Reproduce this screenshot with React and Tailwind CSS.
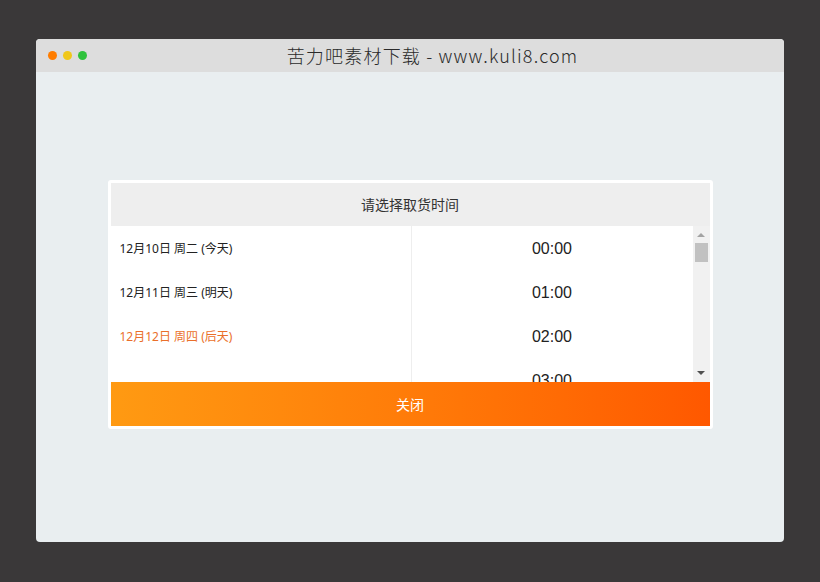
import React from "react";

const days = [
  { label: "12月10日 周二 (今天)", active: false },
  { label: "12月11日 周三 (明天)", active: false },
  { label: "12月12日 周四 (后天)", active: true },
];

const times = ["00:00", "01:00", "02:00", "03:00"];

const App = () => {
  return (
    <div className="w-[820px] h-[582px] bg-[#3a3839] pt-[39px] px-[36px] font-['Noto_Sans','Noto_Sans_CJK_SC',sans-serif]">
      <div className="w-[748px] h-[503px] flex flex-col rounded-[4px] overflow-hidden bg-[#e9eef0]">
        {/* title bar */}
        <div className="h-[33px] bg-[#dddddd] flex items-center relative">
          <div className="flex gap-[6px] pl-[12px]">
            <span className="w-[9px] h-[9px] rounded-full bg-[#ff7d00]" />
            <span className="w-[9px] h-[9px] rounded-full bg-[#f0c71a]" />
            <span className="w-[9px] h-[9px] rounded-full bg-[#2fc23c]" />
          </div>
          <div className="flex-1 text-center pr-[6px] text-[18px] font-light text-[#2a2a2a] tracking-[1.2px] font-['Noto_Sans_CJK_SC',sans-serif]">
            苦力吧素材下载 - www.kuli8.com
          </div>
        </div>

        {/* body */}
        <div className="flex-1 flex justify-center pt-[108px]">
          <div className="w-[605px] h-[249px] border-[3px] border-white rounded-[3px] bg-white flex flex-col">
            <div className="h-[43px] bg-[#eeeeee] flex items-center justify-center text-[14px] text-[#333] font-['Noto_Sans_CJK_SC',sans-serif]">
              请选择取货时间
            </div>
            <div className="h-[156px] flex">
              <div className="w-[301px] border-r border-[#eeeeee]">
                {days.map((d) => (
                  <div
                    key={d.label}
                    className={`h-[44px] flex items-center pl-[9px] pt-[1px] text-[12px] ${
                      d.active ? "text-[#ea6f2a]" : "text-[#222]"
                    }`}
                  >
                    {d.label}
                  </div>
                ))}
              </div>
              <div className="flex-1 overflow-hidden">
                {times.map((t) => (
                  <div key={t} className="h-[44px] flex items-center justify-center pt-[1px] text-[16px] text-[#222] font-['Liberation_Sans',sans-serif]">
                    {t}
                  </div>
                ))}
              </div>
              <div className="w-[17px] bg-[#f1f1f1] flex flex-col items-center">
                <svg width="8" height="17" viewBox="0 0 8 17" className="shrink-0">
                  <path d="M0 11 L4 7 L8 11 Z" fill="#a3a3a3" />
                </svg>
                <div className="w-[13px] h-[19px] bg-[#c1c1c1]" />
                <div className="flex-1" />
                <svg width="8" height="17" viewBox="0 0 8 17" className="shrink-0">
                  <path d="M0 6 L4 10 L8 6 Z" fill="#505050" />
                </svg>
              </div>
            </div>
            <button className="h-[44px] w-full bg-gradient-to-r from-[#ff9a12] to-[#ff5800] text-white text-[14px] flex items-center justify-center font-['Noto_Sans_CJK_SC',sans-serif]">
              关闭
            </button>
          </div>
        </div>
      </div>
    </div>
  );
};

export default App;
